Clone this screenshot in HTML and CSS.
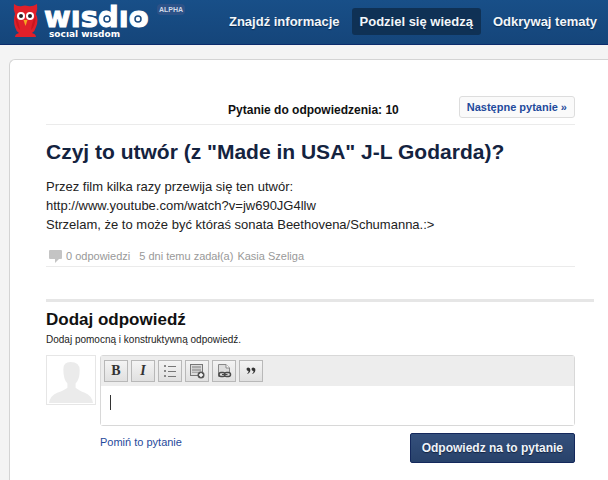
FILE: index.html
```html
<!DOCTYPE html>
<html lang="pl">
<head>
    <meta charset="UTF-8">
    <meta name="viewport" content="width=device-width, initial-scale=1.0">
    <title>Wisdio - Podziel się wiedzą</title>
    <link rel="stylesheet" href="styles.css">
</head>
<body>
    <header class="top-bar">
        <a class="logo" href="#" aria-label="wisdio social wisdom">
            <svg width="136" height="40" viewBox="0 0 136 40">
                <!-- owl -->
                <path fill="#e0202a" d="M1 4Q5 7 9 6Q12 5 15 6Q19 7 24 4Q25 9 23 14Q26 20 23 27Q22 31 19 33Q23 34 23 37H2Q2 34 6 33Q3 31 2 27Q0 20 2 14Q0 9 1 4Z"/>
                <path fill="#c8161f" d="M2 16Q6 21 7 30Q3 27 2 16ZM23 16Q19 21 18 30Q22 27 23 16Z"/>
                <circle cx="8" cy="16" r="4" fill="#fff"/>
                <circle cx="17" cy="16" r="4" fill="#fff"/>
                <circle cx="8" cy="16" r="2" fill="#2a2028"/>
                <circle cx="17" cy="16" r="2" fill="#2a2028"/>
                <path fill="#f6a821" d="M10.500 20H14.500L12.500 26Z"/>
                <text class="logo-name" x="31" y="27">wısdıo</text>
                <text class="logo-tagline" x="36" y="37">socıal wısdom</text>
                <circle cx="94" cy="19" r="5" fill="#fff"/>
                <circle cx="94" cy="19" r="3" fill="none" stroke="#174a80" stroke-width="1.500"/>
                <circle cx="125" cy="19" r="5" fill="#fff"/>
                <circle cx="125" cy="19" r="3" fill="none" stroke="#174a80" stroke-width="1.500"/>
            </svg>
        </a>
        <span class="alpha">ALPHA</span>
        <nav class="main-nav">
            <a href="#">Znajdź informacje</a>
            <a href="#" class="active">Podziel się wiedzą</a>
            <a href="#">Odkrywaj tematy</a>
        </nav>
    </header>

    <main class="content">
        <section class="question">
            <div class="question-nav">
                <span class="question-count">Pytanie do odpowiedzenia: 10</span>
                <button type="button" class="next-btn">Następne pytanie »</button>
            </div>
            <h1>Czyj to utwór (z "Made in USA" J-L Godarda)?</h1>
            <p class="question-text">Przez film kilka razy przewija się ten utwór:<br>
                http://www.youtube.com/watch?v=jw690JG4llw<br>
                Strzelam, że to może być któraś sonata Beethovena/Schumanna.:&gt;</p>
            <div class="question-meta">
                <svg width="13" height="13" viewBox="0 0 13 13" aria-hidden="true">
                    <path fill="#c4c4c4" d="M1 0H12Q13 0 13 1V8Q13 9 12 9H10L6 13V9H1Q0 9 0 8V1Q0 0 1 0Z"/>
                </svg>
                <span>0 odpowiedzi</span>
                <span class="asked">5 dni temu zadał(a)</span>
                <span>Kasia Szeliga</span>
            </div>
        </section>

        <section class="answer">
            <h2>Dodaj odpowiedź</h2>
            <label class="hint" for="answer-text">Dodaj pomocną i konstruktywną odpowiedź.</label>
            <form class="answer-form">
                <div class="avatar">
                    <svg viewBox="0 0 45 45" aria-hidden="true">
                        <path fill="#ebebeb" d="M15 12Q15 5 22 5Q31 5 31 13Q31 22 27 26V30Q29 32 36 35Q43 38 44 45H1Q2 38 9 35Q17 32 19 30V26Q15 22 15 12Z"/>
                    </svg>
                </div>
                <div class="answer-main">
                    <div class="editor">
                        <div class="toolbar">
                            <button type="button" class="tool bold" aria-label="Pogrubienie">B</button>
                            <button type="button" class="tool italic" aria-label="Kursywa">I</button>
                            <button type="button" class="tool" aria-label="Lista">
                                <svg width="14" height="14" viewBox="0 0 14 14">
                                    <path fill="#888" d="M1 1h2v2H1zM1 6h2v2H1zM1 11h2v2H1z"/>
                                    <path stroke="#777" d="M5 2.500h8M5 7.500h8M5 12.500h8"/>
                                </svg>
                            </button>
                            <button type="button" class="tool" aria-label="Obrazek">
                                <svg width="16" height="16" viewBox="0 0 16 16">
                                    <rect x="1.500" y="1.500" width="12" height="11" fill="#ddd" stroke="#777"/>
                                    <rect x="3" y="3" width="9" height="7" fill="#aaa"/>
                                    <path stroke="#ccc" d="M3 5.500h9M3 8.500h9"/>
                                    <circle cx="12" cy="12" r="3.500" fill="#555"/>
                                    <path stroke="#fff" stroke-width="1.500" d="M12 10v4M10 12h4"/>
                                </svg>
                            </button>
                            <button type="button" class="tool" aria-label="Odnośnik">
                                <svg width="16" height="16" viewBox="0 0 16 16">
                                    <path fill="#ddd" stroke="#888" d="M2.500 1.500H10L13.500 5V13.500H2.500Z"/>
                                    <path fill="#fff" stroke="#888" d="M10 1.500V5H13.500"/>
                                    <g fill="#ddd" stroke="#4a4a4a" stroke-width="1.500">
                                        <rect x="3" y="9.500" width="6" height="4" rx="2"/>
                                        <rect x="8.500" y="9.500" width="6" height="4" rx="2"/>
                                    </g>
                                    <path stroke="#4a4a4a" d="M6 11.500h5.500"/>
                                </svg>
                            </button>
                            <button type="button" class="tool" aria-label="Cytat">
                                <svg width="12" height="14" viewBox="0 0 12 14">
                                    <path fill="#333" d="M2 10Q4 8 3.500 7Q1.500 7 1.500 5Q1.500 3.500 3.200 3.500Q5.400 3.500 5.400 6Q5.200 9 2 10ZM7 10Q9 8 8.500 7Q6.500 7 6.500 5Q6.500 3.500 8.200 3.500Q10.400 3.500 10.400 6Q10.200 9 7 10Z"/>
                                </svg>
                            </button>
                        </div>
                        <textarea id="answer-text"></textarea>
                        <span class="caret"></span>
                    </div>
                    <div class="actions">
                        <a href="#">Pomiń to pytanie</a>
                        <button type="submit" class="submit-btn">Odpowiedz na to pytanie</button>
                    </div>
                </div>
            </form>
        </section>
    </main>
</body>
</html>
```
FILE: styles.css
```css
* {
    box-sizing: border-box;
}

body {
    margin: 0;
    background-color: #f4f4f4;
    color: #222;
    font-family: "Liberation Sans", Arial, sans-serif;
    font-size: 13px;
}

a {
    color: #1f4a9c;
    text-decoration: none;
}

button {
    font-family: inherit;
    cursor: pointer;
}

.top-bar {
    display: flex;
    align-items: flex-start;
    height: 45px;
    padding-left: 13px;
    background: linear-gradient(#184f88, #15457a);
    border-bottom: 1px solid #0c2c6c;
}

.logo svg {
    display: block;
}

.logo-name {
    fill: #fff;
    stroke: #fff;
    stroke-width: 1px;
    font: bold 29px "DejaVu Sans", sans-serif;
}

.logo-tagline {
    fill: #fff;
    font: bold 9px "DejaVu Sans", sans-serif;
}

.alpha {
    margin: 4px 0 0 8px;
    padding: 0 2px;
    background-color: #2d5287;
    border-radius: 4px;
    color: #cfd9e8;
    font-size: 7px;
    font-weight: bold;
    line-height: 11px;
}

.main-nav {
    display: flex;
    margin: 8px 3px 0 auto;
    gap: 4px;
}

.main-nav a {
    padding: 0 8px;
    border-radius: 3px;
    color: #f2f6fa;
    font-weight: bold;
    line-height: 27px;
    text-shadow: 0 1px 1px #0b2a4d;
    white-space: nowrap;
}

.main-nav a.active {
    background-color: #0f3155;
}

.content {
    min-height: calc(100vh - 59px);
    margin: 14px 0 0 9px;
    padding: 36px 14px 16px 36px;
    background-color: #fff;
    border: 1px solid #d4d4d4;
    border-width: 1px 0 0 1px;
    border-radius: 6px 0 0 0;
}

.question {
    margin-right: 19px;
    border-bottom: 1px solid #ebebeb;
}

.question-nav {
    display: flex;
    justify-content: flex-end;
    align-items: center;
    gap: 60px;
    padding-bottom: 6px;
    border-bottom: 1px solid #ebebeb;
}

.question-count {
    margin-top: 6px;
    color: #111;
    font-size: 12px;
    font-weight: bold;
}

.next-btn {
    height: 22px;
    padding: 0 7px;
    background-color: #fafafa;
    border: 1px solid #ddd;
    border-radius: 3px;
    color: #1f4a9c;
    font-size: 11px;
    font-weight: bold;
}

h1 {
    margin: 14px 0 12px;
    color: #14233f;
    font-size: 21px;
    line-height: 26px;
}

.question-text {
    margin: 0;
    line-height: 19px;
}

.question-meta {
    display: flex;
    align-items: center;
    gap: 4px;
    padding: 14px 0 2px 3px;
    color: #999;
    font-size: 11px;
    line-height: 16px;
}

.asked {
    margin-left: 5px;
}

.answer {
    margin-top: 32px;
    padding-right: 19px;
    border-top: 3px solid #e6e6e6;
}

h2 {
    margin: 8px 0 2px;
    color: #111;
    font-size: 17px;
    line-height: 20px;
}

.hint {
    display: block;
    font-size: 10px;
    line-height: 16px;
}

.answer-form {
    display: flex;
    align-items: flex-start;
    gap: 4px;
    margin-top: 7px;
}

.avatar {
    flex: none;
    width: 50px;
    padding: 1px;
    border: 1px solid #e6e6e6;
}

.avatar svg {
    display: block;
}

.answer-main {
    flex: 1;
}

.editor {
    position: relative;
    border: 1px solid #d8d8d8;
    border-radius: 3px;
}

.toolbar {
    display: flex;
    gap: 3px;
    padding: 4px 3px;
    background-color: #ededed;
}

.tool {
    display: flex;
    justify-content: center;
    align-items: center;
    width: 24px;
    height: 22px;
    padding: 0;
    background: linear-gradient(#f4f4f4, #e0e0e0);
    border: 1px solid #b8b8b8;
}

.bold,
.italic {
    color: #333;
    font: bold 14px "Liberation Serif", serif;
}

.italic {
    font-style: italic;
}

textarea {
    display: block;
    width: 100%;
    height: 39px;
    padding: 8px;
    border: none;
    outline: none;
    resize: none;
    font: inherit;
}

.caret {
    position: absolute;
    left: 9px;
    top: 39px;
    width: 1px;
    height: 15px;
    background-color: #333;
}

.actions {
    display: flex;
    justify-content: space-between;
    align-items: flex-start;
    margin-top: 7px;
}

.actions a {
    font-size: 11px;
    line-height: 18px;
}

.submit-btn {
    height: 30px;
    padding: 0 11px;
    background: linear-gradient(#34507c, #28426a);
    border: 1px solid #14285c;
    border-radius: 2px;
    color: #f0f4fa;
    font-size: 12px;
    font-weight: bold;
    text-shadow: 0 1px 1px #14233f;
}
```
